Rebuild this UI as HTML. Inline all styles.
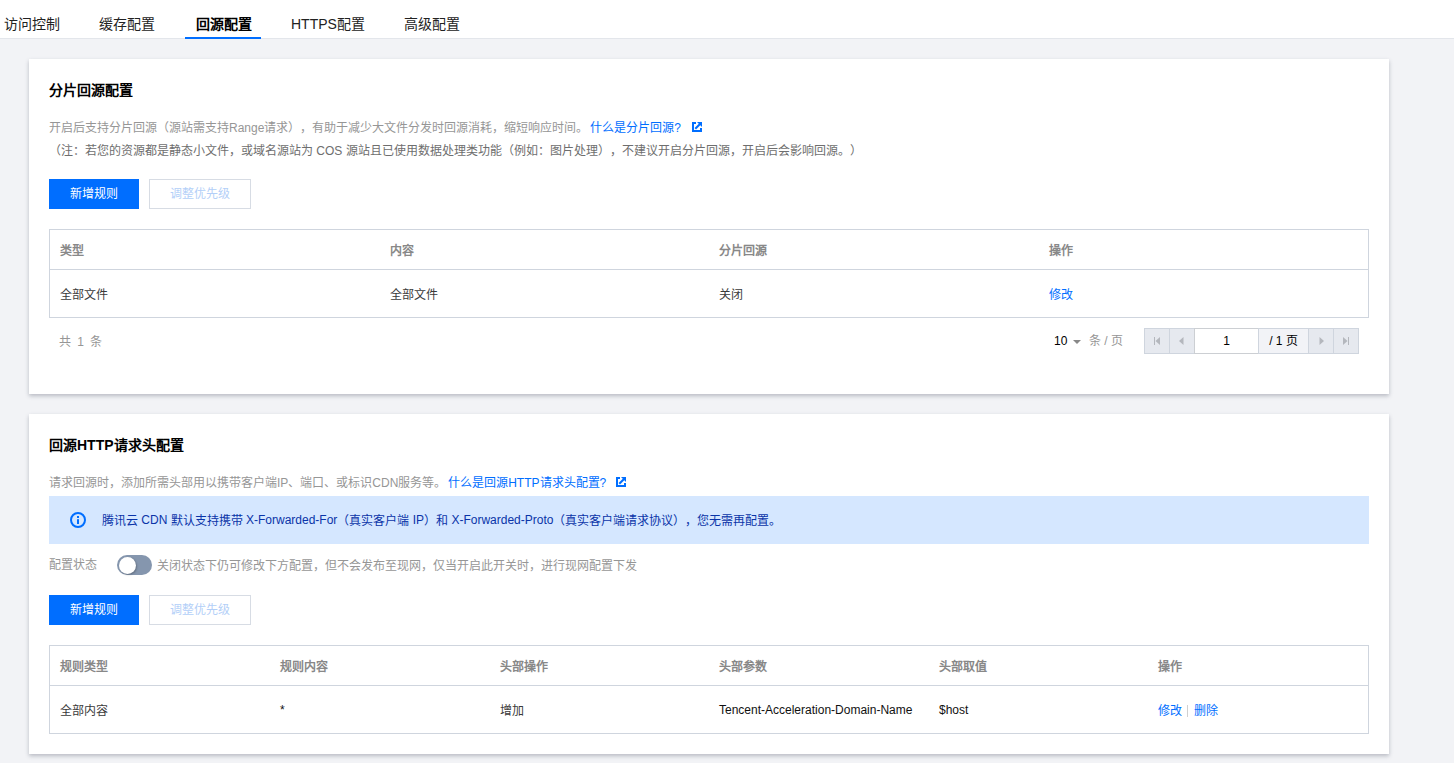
<!DOCTYPE html>
<html lang="zh-CN"><head><meta charset="utf-8">
<style>
*{box-sizing:border-box;margin:0;padding:0}
html,body{width:1454px;height:763px;overflow:hidden}
body{text-spacing-trim:space-all;background:#f2f3f6;font-family:"Liberation Sans",sans-serif;font-size:12px;color:#000;position:relative}
.abs{position:absolute;white-space:nowrap}
.tabs{position:absolute;left:0;top:0;width:1454px;height:39px;background:#fff;border-bottom:1px solid #e3e6eb}
.tab{position:absolute;top:14px;font-size:14px;line-height:20px;color:#222}
.tab.on{color:#000}
.tab.on{font-weight:bold}
.uline{position:absolute;left:185px;top:37px;width:76px;height:2px;background:#006eff}
.card{position:absolute;left:29px;width:1360px;background:#fff;box-shadow:0 2px 4px 0 rgba(54,58,80,.3)}
.title{font-size:14px;font-weight:bold;line-height:20px}
.desc{color:#969696;line-height:18px}
.link{color:#006eff}
.ml{margin-left:-1.5px}
.td.link{color:#006eff}
.lt{position:relative;top:-1px}
.btn{position:absolute;height:30px;line-height:28px;text-align:center;font-size:12px}
.btn.p{background:#006eff;color:#fff;border:1px solid #006eff}
.btn.d{background:#fff;color:#b3cff8;border:1px solid #d7dce4}
.tbl{position:absolute;left:20px;width:1320px;border:1px solid #cfd5de}
.tbl .hd{position:relative;height:40px;border-bottom:1px solid #cfd5de}
.tbl .row{position:relative;height:47px}
.th{position:absolute;top:13px;color:#888;font-weight:600;line-height:16px}
.td{position:absolute;top:17px;line-height:16px;color:#3a3a3a}
.pager{position:absolute;left:1115px;top:269px;width:215px;height:26px}
.pb{position:absolute;top:0;height:26px;background:#e6e9ef;border:1px solid #cfd5de;line-height:0}
.pin{position:absolute;left:50px;top:0;width:65px;height:26px;background:#fff;border:1px solid #cccfd3;text-align:center;line-height:24px}
.ptot{position:absolute;left:114px;top:0;width:51px;height:26px;background:#f2f3f7;border:1px solid #cfd5de;text-align:center;line-height:24px}
</style></head><body>
<div class="tabs">
  <div class="tab" style="left:4px">访问控制</div>
  <div class="tab" style="left:99px">缓存配置</div>
  <div class="tab on" style="left:196px">回源配置</div>
  <div class="tab" style="left:291px">HTTPS配置</div>
  <div class="tab" style="left:404px">高级配置</div>
  <div class="uline"></div>
</div>

<div class="card" style="top:59px;height:335px">
  <div class="abs title" style="left:20px;top:21px">分片回源配置</div>
  <div class="abs desc" style="left:20px;top:60px">开启后支持分片回源（源站需支持Range请求），有助于减少大文件分发时回源消耗，缩短响应时间。 <span class="link ml">什么是分片回源?</span></div>
  <div class="abs" style="left:663px;top:63px;line-height:0"><svg class="ext" width="10" height="10" viewBox="0 0 10 10"><path d="M0 0H4V2H2V8H8V6H10V10H0Z" fill="#006eff"/><path d="M5 0H10V5Z" fill="#006eff"/><path d="M3.3 6.7L8 2" stroke="#006eff" stroke-width="2"/></svg></div>
  <div class="abs desc" style="left:20px;top:83px;color:#6e6e6e">（注：若您的资源都是静态小文件，或域名源站为 COS 源站且已使用数据处理类功能（例如：图片处理），不建议开启分片回源，开启后会影响回源。）</div>
  <div class="btn p" style="left:20px;top:120px;width:90px">新增规则</div>
  <div class="btn d" style="left:120px;top:120px;width:102px">调整优先级</div>
  <div class="tbl" style="top:170px">
    <div class="hd">
      <div class="th" style="left:10px">类型</div>
      <div class="th" style="left:340px">内容</div>
      <div class="th" style="left:669px">分片回源</div>
      <div class="th" style="left:999px">操作</div>
    </div>
    <div class="row">
      <div class="td" style="left:10px">全部文件</div>
      <div class="td" style="left:340px">全部文件</div>
      <div class="td" style="left:669px">关闭</div>
      <div class="td link" style="left:999px">修改</div>
    </div>
  </div>
  <div class="abs desc" style="left:30px;top:274px;word-spacing:3px">共 1 条</div>
  <div class="abs" style="left:1025px;top:274px;line-height:16px">10</div>
  <div class="abs" style="left:1044px;top:281px;width:0;height:0;border-left:4px solid transparent;border-right:4px solid transparent;border-top:4px solid #888"></div>
  <div class="abs desc" style="left:1060px;top:273px">条 / 页</div>
  <div class="pager">
    <div class="pb" style="left:0;width:26px"><svg width="26" height="24" viewBox="0 0 26 24"><rect x="9" y="8" width="1" height="8" fill="#b4b7bd"/><path d="M15 8V16L10.5 12Z" fill="#b4b7bd"/></svg></div>
    <div class="pb" style="left:25px;width:26px"><svg width="26" height="24" viewBox="0 0 26 24"><path d="M13.5 8V16L9 12Z" fill="#b4b7bd"/></svg></div>
    <div class="pin">1</div>
    <div class="ptot">/ 1 页</div>
    <div class="pb" style="left:164px;width:26px"><svg width="26" height="24" viewBox="0 0 26 24"><path d="M10.5 8V16L15 12Z" fill="#b4b7bd"/></svg></div>
    <div class="pb" style="left:189px;width:26px"><svg width="26" height="24" viewBox="0 0 26 24"><path d="M9 8V16L13.5 12Z" fill="#b4b7bd"/><rect x="14" y="8" width="1" height="8" fill="#b4b7bd"/></svg></div>
  </div>
</div>

<div class="card" style="top:414px;height:340px">
  <div class="abs title" style="left:20px;top:21px">回源HTTP请求头配置</div>
  <div class="abs desc" style="left:20px;top:60px">请求回源时，添加所需头部用以携带客户端IP、端口、或标识CDN服务等。 <span class="link ml">什么是回源HTTP请求头配置?</span></div>
  <div class="abs" style="left:587px;top:63px;line-height:0"><svg class="ext" width="10" height="10" viewBox="0 0 10 10"><path d="M0 0H4V2H2V8H8V6H10V10H0Z" fill="#006eff"/><path d="M5 0H10V5Z" fill="#006eff"/><path d="M3.3 6.7L8 2" stroke="#006eff" stroke-width="2"/></svg></div>
  <div class="abs" style="left:20px;top:82px;width:1320px;height:48px;background:#d5e7ff"></div>
  <div class="abs" style="left:41px;top:98px;line-height:0"><svg width="16" height="16" viewBox="0 0 16 16"><circle cx="8" cy="8" r="7" fill="none" stroke="#006eff" stroke-width="2"/><rect x="7" y="4" width="2" height="2" fill="#006eff"/><rect x="7" y="7.2" width="2" height="4.8" fill="#006eff"/></svg></div>
  <div class="abs" style="left:73px;top:98px;color:#0a34a8;line-height:18px">腾讯云 <span class="lt">CDN</span> 默认支持携带 <span class="lt">X-Forwarded-For</span>（真实客户端 <span class="lt">IP</span>）和 <span class="lt">X-Forwarded-Proto</span>（真实客户端请求协议），您无需再配置。</div>
  <div class="abs desc" style="left:20px;top:142px">配置状态</div>
  <div class="abs" style="left:88px;top:141px;width:35px;height:20px;border-radius:10px;background:#8596ae"><div style="position:absolute;left:1.5px;top:1.5px;width:17px;height:17px;border-radius:50%;background:#fff;box-shadow:1px 1px 2px rgba(0,0,0,.25)"></div></div>
  <div class="abs desc" style="left:128px;top:143px">关闭状态下仍可修改下方配置，但不会发布至现网，仅当开启此开关时，进行现网配置下发</div>
  <div class="btn p" style="left:20px;top:181px;width:90px">新增规则</div>
  <div class="btn d" style="left:120px;top:181px;width:102px">调整优先级</div>
  <div class="tbl" style="top:231px">
    <div class="hd">
      <div class="th" style="left:10px">规则类型</div>
      <div class="th" style="left:230px">规则内容</div>
      <div class="th" style="left:450px">头部操作</div>
      <div class="th" style="left:669px">头部参数</div>
      <div class="th" style="left:889px">头部取值</div>
      <div class="th" style="left:1108px">操作</div>
    </div>
    <div class="row">
      <div class="td" style="left:10px">全部内容</div>
      <div class="td" style="left:230px;top:16px;color:#111">*</div>
      <div class="td" style="left:450px">增加</div>
      <div class="td" style="left:669px;top:16px;color:#111">Tencent-Acceleration-Domain-Name</div>
      <div class="td" style="left:889px;top:16px;color:#111">$host</div>
      <div class="td link" style="left:1108px">修改</div><div style="position:absolute;left:1137px;top:19px;width:1px;height:12px;background:#d0d0d0"></div><div class="td link" style="left:1144px">删除</div>
    </div>
  </div>
</div>
</body></html>
